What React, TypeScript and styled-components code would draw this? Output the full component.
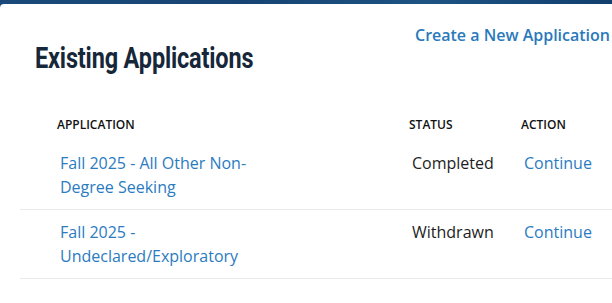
import React from 'react';
import styled, { createGlobalStyle } from 'styled-components';

interface ApplicationRow {
  name: string;
  status: string;
}

const rows: ApplicationRow[] = [
  { name: 'Fall 2025 - All Other Non-Degree Seeking', status: 'Completed' },
  { name: 'Fall 2025 - Undeclared/Exploratory', status: 'Withdrawn' },
];

const GlobalStyle = createGlobalStyle`
  html, body {
    margin: 0;
    padding: 0;
    height: 100%;
  }
  body {
    background: linear-gradient(90deg, #1b4a7a 0%, #174473 40%, #1d5383 70%, #123f6e 100%);
    font-family: "Open Sans", "Noto Sans", sans-serif;
    overflow: hidden;
  }
`;

const Card = styled.div`
  margin-top: 4px;
  background: #fff;
  border-radius: 4px 0 0 0;
  min-height: 299px;
  width: 640px;
`;

const Header = styled.div`
  display: flex;
  justify-content: space-between;
  align-items: flex-start;
  padding: 19px 0 0 35px;
  height: 88px;
  box-sizing: border-box;
`;

const Title = styled.h1`
  margin: 20px 0 0 0;
  font-family: Roboto, sans-serif;
  font-weight: 700;
  font-size: 29px;
  line-height: 30px;
  color: #16273a;
  letter-spacing: -0.2px;
  transform: scaleX(0.81);
  transform-origin: left center;
  white-space: nowrap;
`;

const Link = styled.a`
  color: #2b7bbf;
  text-decoration: none;
  font-size: 16px;
  line-height: 24px;
  cursor: pointer;
`;

const TopLink = styled(Link)`
  margin-right: 30px;
  font-weight: 600;
  color: #2a79bb;
`;

const Table = styled.div`
  margin-left: 20px;
`;

const Row = styled.div<{ $head?: boolean }>`
  display: grid;
  grid-template-columns: 352px 112px 1fr;
  padding: ${(p) => (p.$head ? '24px 0 7px 37px' : '10px 0 10px 37px')};
  border-bottom: ${(p) => (p.$head ? 'none' : '1px solid #e9e9e9')};
`;

const HeadCell = styled.div`
  font-size: 12px;
  font-weight: 600;
  line-height: 18px;
  color: #111;
  text-transform: uppercase;
`;

const Cell = styled.div`
  padding-left: 3px;
  font-size: 16px;
  line-height: 24px;
  color: #1d1d1d;
`;

const NameLink = styled(Link)`
  display: block;
  max-width: 215px;
`;

export default function App() {
  return (
    <>
      <GlobalStyle />
      <Card>
        <Header>
          <Title>Existing Applications</Title>
          <TopLink>Create a New Application</TopLink>
        </Header>
        <Table>
          <Row $head>
            <HeadCell>Application</HeadCell>
            <HeadCell>Status</HeadCell>
            <HeadCell>Action</HeadCell>
          </Row>
          {rows.map((row) => (
            <Row key={row.name}>
              <Cell>
                <NameLink>{row.name}</NameLink>
              </Cell>
              <Cell>{row.status}</Cell>
              <Cell>
                <Link>Continue</Link>
              </Cell>
            </Row>
          ))}
        </Table>
      </Card>
    </>
  );
}
